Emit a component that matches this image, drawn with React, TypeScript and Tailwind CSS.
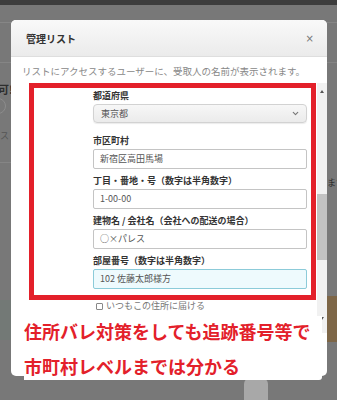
import { ChevronDown } from 'lucide-react';

const jp = "font-['Noto_Sans_CJK_JP','Noto_Sans',sans-serif]";

function Field({ label, value, active }: { label: string; value: string; active?: boolean }) {
  return (
    <div className="flex flex-col">
      <div className="h-[12px] leading-[12px] text-[9px] font-bold text-[#333]">{label}</div>
      <div
        className={`mt-[2px] h-[20px] flex items-center pl-[6px] rounded-[2px] border text-[9px] text-[#555] ${
          active ? 'border-[#8ccbd9] bg-[#eefafd]' : 'border-[#c4c4c4] bg-white'
        }`}
      >
        {value}
      </div>
    </div>
  );
}

export default function App() {
  return (
    <div className={`relative w-[337px] h-[400px] overflow-hidden bg-[#787878] ${jp}`}>
      {/* dimmed page behind */}
      <div className="h-[5px] bg-[#3d3d3d]" />
      <div className="mt-[17px] h-px bg-[#868686]" />
      <div className="mt-[39px] h-px bg-[#858585]" />
      <div className="mt-[19px] flex justify-between">
        <span className="-ml-[2px] text-[11px] font-bold text-[#2e2e2e] leading-[14px]">可!</span>
      </div>
      <div className="-ml-[10px] mt-[2px] w-[16px] h-[16px] rounded-full border border-[#8c8c8c]" />
      <div className="mt-[16px] text-[9px] text-[#555] leading-[12px]">スト</div>
      <div className="mt-[20px] h-px w-[12px] bg-[#858585]" />
      <div className="mt-[14px] flex justify-end">
        <span className="w-[10px] overflow-hidden text-[9px] leading-[11px] text-[#2e2e2e] whitespace-nowrap">ます</span>
      </div>
      <div className="mt-[112px] w-[14px] h-[40px] bg-[#6f7a74] opacity-60" />
      <div className="absolute right-0 top-[296px] w-[16px] h-[46px] bg-[#7d6647]" />
      <div className="absolute left-[244px] top-[378px] w-[24px] h-[22px] rounded-t-[6px] bg-[#a8a8a8]" />
      <div className="absolute left-[55px] top-[378px] w-[100px] h-px bg-[#666]" />
      <div className="absolute left-[175px] top-[378px] w-[110px] h-px bg-[#666]" />

      {/* modal */}
      <div className="absolute left-[11px] top-[20px] w-[316px] h-[356px] rounded-[5px] bg-white overflow-hidden flex flex-col">
        <div className="h-[37px] shrink-0 flex items-center justify-between pl-[15px] pr-[13px] border-b border-[#dedede] bg-gradient-to-b from-[#f9f9f9] to-[#ebebeb]">
          <span className="text-[10px] font-bold text-[#333]">管理リスト</span>
          <span className="text-[10px] text-[#777] font-['DejaVu_Sans',sans-serif]">×</span>
        </div>
        <p className="mt-[8px] pl-[11px] h-[12px] leading-[12px] text-[9.5px] text-[#888] whitespace-nowrap">
          リストにアクセスするユーザーに、受取人の名前が表示されます。
        </p>
        <div className="mt-[6px] h-[250px] flex">
          <div className="ml-[18px] w-[287px] flex flex-col">
            <div className="h-[217px] border-[5px] border-[#e3202a] pl-[59px] pr-[4px] pt-[2px] flex flex-col">
              <div className="h-[12px] leading-[12px] text-[9px] font-bold text-[#333]">都道府県</div>
              <div className="mt-[2px] h-[19px] flex items-center justify-between pl-[7px] pr-[6px] rounded-[4px] border border-[#d2d2d2] bg-gradient-to-b from-[#f7f7f7] to-[#ebebeb] shadow-[0_1px_1px_rgba(0,0,0,0.08)] text-[9px] text-[#555]">
                <span>東京都</span>
                <ChevronDown className="w-[9px] h-[9px] text-[#777]" strokeWidth={3} />
              </div>
              <div className="mt-[12px] flex flex-col gap-[6px]">
                <Field label="市区町村" value="新宿区高田馬場" />
                <Field label="丁目・番地・号（数字は半角数字）" value="1-00-00" />
                <Field label="建物名 / 会社名（会社への配送の場合）" value="○×パレス" />
                <Field label="部屋番号（数字は半角数字）" value="102 佐藤太郎様方" active />
              </div>
            </div>
            <div className="mt-[1px] pl-[67px] flex items-center gap-[3px] h-[10px]">
              <span className="w-[7px] h-[7px] border border-[#888] rounded-[1px] bg-white" />
              <span className="text-[9px] leading-[10px] text-[#777]">いつもこの住所に届ける</span>
            </div>
          </div>
          <div className="ml-[1px] w-[10px] flex flex-col items-center bg-[#f1f1f1]">
            <span className="mt-[7px] w-0 h-0 border-l-[2.5px] border-r-[2.5px] border-b-[3px] border-l-transparent border-r-transparent border-b-[#555]" />
            <div className="mt-[101px] w-[10px] h-[66px] bg-[#c2c2c2]" />
            <span className="mt-[57px] w-0 h-0 border-l-[2.5px] border-r-[2.5px] border-t-[3px] border-l-transparent border-r-transparent border-t-[#555]" />
          </div>
        </div>
      </div>

      {/* annotation */}
      <div className="absolute left-[24px] top-[316px] w-[298px] h-[64px] bg-white rounded-br-[3px]">
        <div className="h-[31px] leading-[31px] text-[18px] font-bold text-[#e3202a] whitespace-nowrap">
          住所バレ対策をしても追跡番号等で
        </div>
        <div className="mt-[4px] h-[31px] leading-[31px] text-[18px] font-bold text-[#e3202a] whitespace-nowrap">
          市町村レベルまでは分かる
        </div>
      </div>
    </div>
  );
}
